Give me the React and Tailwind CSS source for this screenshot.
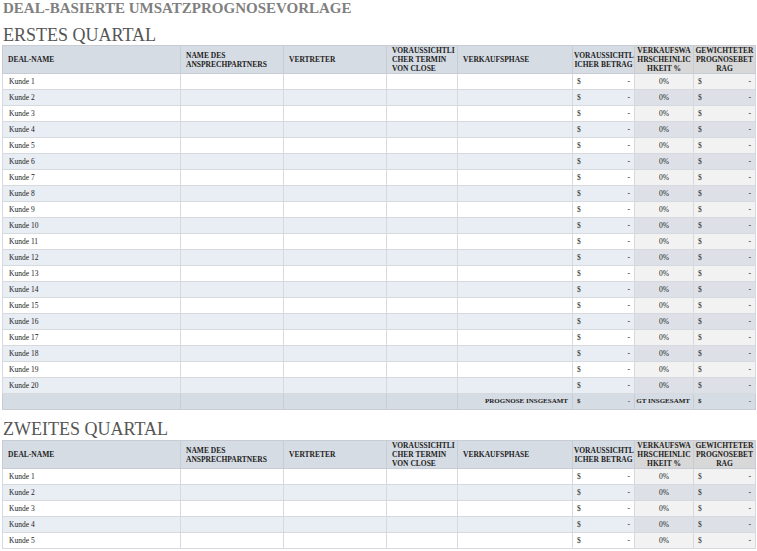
const cols=[178,103,103,71,115,62,59,62];
const font={fontFamily:'"Liberation Serif","DejaVu Serif",serif'};
function Header(){
  const h=["DEAL-NAME","NAME DES ANSPRECHPARTNERS","VERTRETER","VORAUSSICHTLI CHER TERMIN VON CLOSE","VERKAUFSPHASE","VORAUSSICHTL ICHER BETRAG","VERKAUFSWA HRSCHEINLIC HKEIT %","GEWICHTETER PROGNOSEBET RAG"];
  return <tr className="h-[28px]">{h.map((t,i)=>(
    <th key={i} className={`border border-[#c8ccd4] text-[7.5px] leading-[9px] font-bold text-[#222] ${i>=5?'px-[1px]':'px-[5px]'} ${i>=6?'bg-[#d8d8d8]':'bg-[#d6dce4]'} ${i>=5?'text-center':'text-left'}`}>{t}</th>))}</tr>;
}
function Row({n,alt}){
  const bg=alt?'bg-[#e9edf4]':'bg-white';
  return <tr className="h-[16px] text-[7.5px] text-[#222]">
    <td className={`${bg} border border-[#d6d9de] px-[6px]`}>Kunde {n}</td>
    {[0,1,2,3].map(i=><td key={i} className={`${bg} border border-[#d6d9de]`}></td>)}
    <td className={`${bg} border border-[#d6d9de] px-[4px]`}><div className="flex justify-between"><span>$</span><span>-</span></div></td>
    <td className={`${alt?'bg-[#dde0e7]':'bg-[#f2f2f2]'} border border-[#d6d9de] border-l-[#999] text-center`}>0%</td>
    <td className={`${alt?'bg-[#dde0e7]':'bg-[#f2f2f2]'} border border-[#d6d9de] px-[4px]`}><div className="flex justify-between"><span>$</span><span>-</span></div></td>
  </tr>;
}
function Table({rows,total}){
  return <table className="border-collapse table-fixed ml-[2px]" style={{width:753}}>
    <colgroup>{cols.map((w,i)=><col key={i} style={{width:w}}/>)}</colgroup>
    <tbody><Header/>
    {Array.from({length:rows},(_,i)=><Row key={i} n={i+1} alt={i%2===1}/>)}
    {total&&<tr className="h-[16px] text-[7px] font-bold text-[#222] bg-[#d6dce4]">
      <td className="border border-[#c8ccd4]"></td><td className="border border-[#c8ccd4]"></td><td className="border border-[#c8ccd4]"></td><td className="border border-[#c8ccd4]"></td>
      <td className="border border-[#c8ccd4] text-right pr-[4px]">PROGNOSE INSGESAMT</td>
      <td className="border border-[#c8ccd4] px-[4px]"><div className="flex justify-between"><span>$</span><span>-</span></div></td>
      <td className="border border-[#c8ccd4] overflow-hidden whitespace-nowrap text-right pr-[3px]">GT INSGESAMT</td>
      <td className="border border-[#c8ccd4] px-[4px]"><div className="flex justify-between"><span>$</span><span>-</span></div></td>
    </tr>}
    </tbody></table>;
}
export default function App(){
  return <div className="w-[757px] h-[551px] overflow-hidden bg-white" style={font}>
    <div className="text-[15px] font-bold text-[#7f7f7f] leading-[17px] pl-[3px]">DEAL-BASIERTE UMSATZPROGNOSEVORLAGE</div>
    <div className="text-[18px] text-[#555] leading-[22px] pl-[3px] mt-[7px] mb-[-1px]">ERSTES QUARTAL</div>
    <Table rows={20} total/>
    <div className="text-[18px] text-[#555] leading-[22px] pl-[3px] mt-[8px]">ZWEITES QUARTAL</div>
    <Table rows={5}/>
  </div>;
}
